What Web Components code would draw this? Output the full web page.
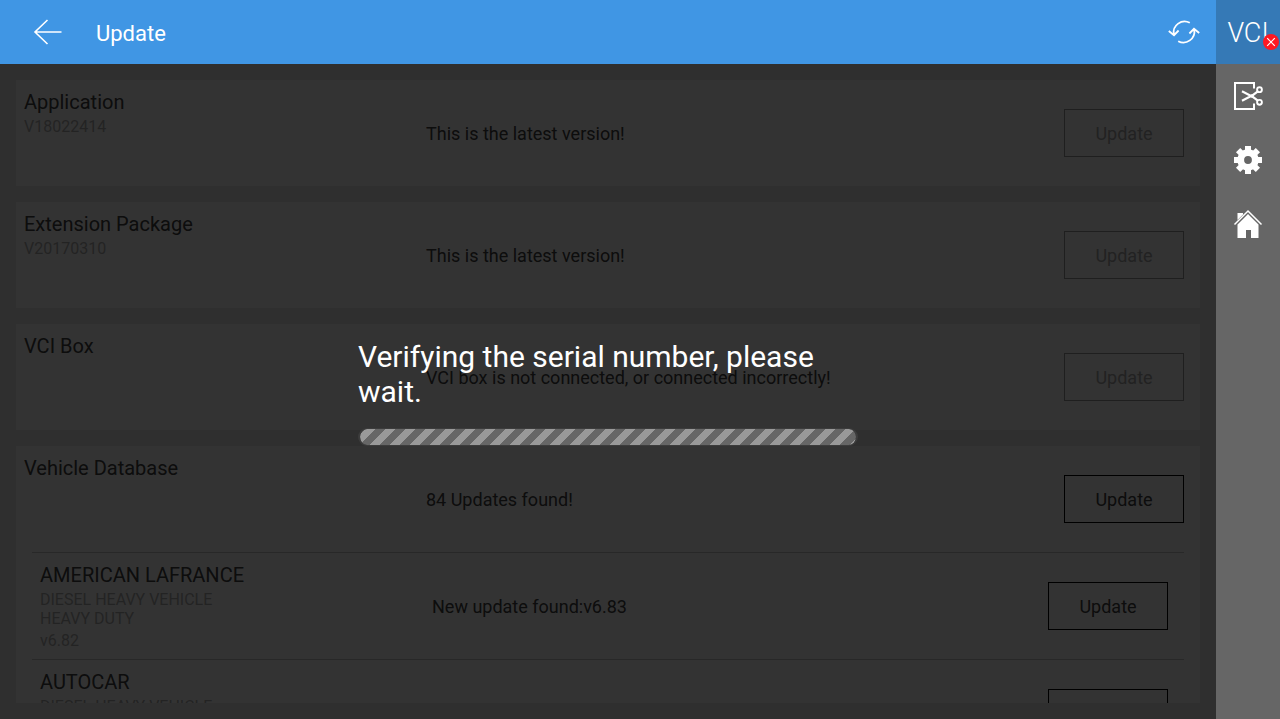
<!DOCTYPE html>
<html lang="en">
<head>
<meta charset="utf-8">
<meta name="viewport" content="width=device-width, initial-scale=1">
<title>Update</title>
<style>
  html, body {
    height: 100%;
    margin: 0;
  }

  body {
    font-family: Roboto, sans-serif;
  }
</style>
</head>
<body>

<update-screen>
  <title-bar slot="header" heading="Update"></title-bar>

  <package-card heading="Application" version="V18022414" status="This is the latest version!" disabled></package-card>
  <package-card heading="Extension Package" version="V20170310" status="This is the latest version!" disabled></package-card>
  <package-card heading="VCI Box" status="VCI box is not connected, or connected incorrectly!" disabled></package-card>
  <package-card heading="Vehicle Database" status="84 Updates found!">
    <vehicle-row heading="AMERICAN LAFRANCE" version="v6.82" status="New update found:v6.83">DIESEL HEAVY VEHICLE<br>HEAVY DUTY</vehicle-row>
    <vehicle-row heading="AUTOCAR">DIESEL HEAVY VEHICLE</vehicle-row>
  </package-card>

  <wait-overlay slot="overlay">Verifying the serial number, please wait.</wait-overlay>
  <side-bar slot="side"></side-bar>
</update-screen>

<script>
// Attach a shadow root filled from markup
function shadow( element, markup ) {
  const template = document.createElement( 'template' );
  template.innerHTML = markup;
  element.attachShadow( {mode: 'open'} );
  element.shadowRoot.appendChild( template.content.cloneNode( true ) );
}

class UpdateScreen extends HTMLElement {
  constructor() {
    super();

    shadow( this, /* template */ `
      <style>
        :host {
          display: flex;
          height: 100vh;
          overflow: hidden;
        }

        .page {
          display: flex;
          flex: 1;
          flex-direction: column;
          min-width: 0;
        }

        main {
          background: #ebebeb;
          box-sizing: border-box;
          display: flex;
          flex: 1;
          min-height: 0;
          padding: 16px;
          position: relative;
        }

        .list {
          display: flex;
          flex: 1;
          flex-direction: column;
          gap: 16px;
          overflow: hidden;
        }
      </style>
      <div class="page">
        <slot name="header"></slot>
        <main>
          <div class="list">
            <slot></slot>
          </div>
          <slot name="overlay"></slot>
        </main>
      </div>
      <slot name="side"></slot>
    ` );
  }
}

class TitleBar extends HTMLElement {
  constructor() {
    super();

    shadow( this, /* template */ `
      <style>
        :host {
          align-items: center;
          background: #4096e4;
          color: #ffffff;
          display: flex;
          flex: none;
          height: 64px;
        }

        h1 {
          flex: 1;
          font-size: 22px;
          font-weight: 400;
          line-height: 32px;
          margin: 0;
          padding-top: 4px;
        }

        button {
          align-items: center;
          background: none;
          border: none;
          color: inherit;
          cursor: pointer;
          display: flex;
          height: 64px;
          justify-content: center;
          padding: 0;
          width: 64px;
        }

        .back {
          width: 96px;
        }

        svg {
          fill: none;
          stroke: currentColor;
        }
      </style>
      <button class="back" aria-label="Back">
        <svg width="32" height="32" viewBox="0 0 32 32" stroke-width="1.6">
          <path d="M15.500 4 3 16l12.500 12M3 16h26.500"/>
        </svg>
      </button>
      <h1></h1>
      <button aria-label="Refresh">
        <svg width="32" height="32" viewBox="0 0 32 32" stroke-width="1.8">
          <path d="M21.800 6.800A11 11 0 0 0 5.800 18.500M.8 15l5.200 4.200 4.600-4.700"/>
          <path d="M10.200 25.200A11 11 0 0 0 26.200 13.500M31.200 17 26 12.800l-4.600 4.700"/>
        </svg>
      </button>
    ` );

    this.$heading = this.shadowRoot.querySelector( 'h1' );
  }

  connectedCallback() {
    this.$heading.textContent = this.getAttribute( 'heading' );
  }
}

class UpdateButton extends HTMLElement {
  constructor() {
    super();

    shadow( this, /* template */ `
      <style>
        :host {
          display: block;
        }

        button {
          background: none;
          border: 1px solid #000000;
          box-sizing: border-box;
          color: #404040;
          display: block;
          font: 18px/22px Roboto, sans-serif;
          height: 48px;
          padding: 2px 0 0;
          width: 100%;
        }

        button:disabled {
          border-color: #9c9c9c;
          color: #a8a8a8;
        }
      </style>
      <button>Update</button>
    ` );

    this.$button = this.shadowRoot.querySelector( 'button' );
  }

  // Watched attributes
  static get observedAttributes() {
    return [
      'disabled'
    ];
  }

  attributeChangedCallback( name, old, value ) {
    this.$button.disabled = value !== null;
  }
}

// Shared between cards and the rows inside them
const entry = /* template */ `
  .entry {
    box-sizing: border-box;
    display: grid;
    height: 106px;
    padding: 8px 16px 0 8px;
  }

  .text {
    color: #b0b0b0;
    font-size: 16px;
    line-height: 19px;
  }

  h2, h3 {
    color: #404040;
    font-size: 20px;
    font-weight: 400;
    line-height: 28px;
    margin: 0;
    padding-bottom: 1px;
  }

  p {
    margin: 0;
  }

  .status {
    color: #404040;
    font-size: 18px;
    line-height: 22px;
    padding-top: 35px;
  }

  update-button {
    padding-top: 21px;
  }
`;

class PackageCard extends HTMLElement {
  constructor() {
    super();

    shadow( this, /* template */ `
      <style>
        ${entry}

        :host {
          background: #ffffff;
          display: block;
          flex: none;
        }

        .entry {
          grid-template-columns: 402fr 638fr 120px;
        }

        .rows {
          padding: 0 16px;
        }
      </style>
      <section>
        <div class="entry">
          <div class="text">
            <h2></h2>
            <p class="version"></p>
          </div>
          <p class="status"></p>
          <update-button></update-button>
        </div>
        <div class="rows"><slot></slot></div>
      </section>
    ` );

    this.$button = this.shadowRoot.querySelector( 'update-button' );
    this.$heading = this.shadowRoot.querySelector( 'h2' );
    this.$status = this.shadowRoot.querySelector( '.status' );
    this.$version = this.shadowRoot.querySelector( '.version' );
  }

  connectedCallback() {
    this.$button.toggleAttribute( 'disabled', this.hasAttribute( 'disabled' ) );
    this.$heading.textContent = this.getAttribute( 'heading' );
    this.$status.textContent = this.getAttribute( 'status' );
    this.$version.textContent = this.getAttribute( 'version' );
  }
}

class VehicleRow extends HTMLElement {
  constructor() {
    super();

    shadow( this, /* template */ `
      <style>
        ${entry}

        :host {
          border-top: 1px solid #c8c8c8;
          display: block;
        }

        .entry {
          grid-template-columns: 7fr 11fr 120px;
        }

        .version {
          padding-top: 3px;
        }
      </style>
      <div class="entry">
        <div class="text">
          <h3></h3>
          <p><slot></slot></p>
          <p class="version"></p>
        </div>
        <p class="status"></p>
        <update-button></update-button>
      </div>
    ` );

    this.$heading = this.shadowRoot.querySelector( 'h3' );
    this.$status = this.shadowRoot.querySelector( '.status' );
    this.$version = this.shadowRoot.querySelector( '.version' );
  }

  connectedCallback() {
    this.$heading.textContent = this.getAttribute( 'heading' );
    this.$status.textContent = this.getAttribute( 'status' );
    this.$version.textContent = this.getAttribute( 'version' );
  }
}

class WaitOverlay extends HTMLElement {
  constructor() {
    super();

    shadow( this, /* template */ `
      <style>
        :host {
          align-items: center;
          background: rgba( 0, 0, 0, 0.80 );
          color: #ffffff;
          display: flex;
          inset: 0;
          justify-content: center;
          position: absolute;
        }

        .dialog {
          display: flex;
          flex-direction: column;
          gap: 19px;
          max-width: 500px;
        }

        label {
          font-size: 30px;
          line-height: 35px;
          padding-top: 1px;
        }

        progress {
          appearance: none;
          background: linear-gradient( 135deg, #666666 25%, #999999 25%, #999999 50%, #666666 50%, #666666 75%, #999999 75% ) -4px 0 / 20px 20px padding-box;
          border: 1px solid #3c3c3c;
          border-left-width: 2px;
          border-radius: 9px;
          border-right-width: 2px;
          box-sizing: border-box;
          display: block;
          height: 18px;
          width: 100%;
        }

        progress::-webkit-progress-bar {
          background: none;
        }
      </style>
      <div class="dialog" role="status">
        <label for="wait"><slot></slot></label>
        <progress id="wait"></progress>
      </div>
    ` );
  }
}

class SideBar extends HTMLElement {
  constructor() {
    super();

    shadow( this, /* template */ `
      <style>
        :host {
          background: #666666;
          display: flex;
          flex: none;
          flex-direction: column;
          width: 64px;
        }

        button {
          align-items: center;
          background: none;
          border: none;
          color: #ffffff;
          cursor: pointer;
          display: flex;
          height: 64px;
          justify-content: center;
          padding: 0;
          width: 64px;
        }

        .vci {
          background: #3579b6;
          font: 300 27px/32px Roboto, sans-serif;
          padding-top: 2px;
          position: relative;
        }

        .badge {
          bottom: 14px;
          position: absolute;
          right: 1px;
        }
      </style>
      <button class="vci">VCI
        <svg class="badge" width="16" height="16" viewBox="0 0 16 16">
          <circle cx="8" cy="8" r="8" fill="#ff1822"/>
          <path d="m4.200 4.200 7.600 7.600m0-7.600-7.600 7.600" stroke="#fff" stroke-width="1.200"/>
        </svg>
      </button>
      <button aria-label="Screenshot">
        <svg width="32" height="32" viewBox="0 0 32 32" fill="none" stroke="currentColor">
          <path d="M22 8.500V3H3v26h19v-5.500" stroke-width="2"/>
          <path d="m10 11.300 9.500 4.900 6.300-4.900M10 20.700l9.500-4.900 6.300 4.900" stroke-width="2.200"/>
          <circle cx="20" cy="16" r="1.800" fill="currentColor" stroke="none"/>
          <circle cx="27.500" cy="9.700" r="2.400" stroke-width="1.900"/>
          <circle cx="27.500" cy="22.300" r="2.400" stroke-width="1.900"/>
        </svg>
      </button>
      <button aria-label="Settings">
        <svg width="32" height="32" viewBox="-16 -16 32 32">
          <circle r="7.300" fill="none" stroke="currentColor" stroke-width="6.800"/>
          <g fill="currentColor">
            <path d="M-3-14h6v5h-6zM-3 9h6v5h-6z"/>
            <path d="M-3-14h6v5h-6zM-3 9h6v5h-6z" transform="rotate(45)"/>
            <path d="M-3-14h6v5h-6zM-3 9h6v5h-6z" transform="rotate(90)"/>
            <path d="M-3-14h6v5h-6zM-3 9h6v5h-6z" transform="rotate(135)"/>
          </g>
        </svg>
      </button>
      <button aria-label="Home">
        <svg width="32" height="32" viewBox="0 0 32 32">
          <path d="M2.500 16.500 16 3l13.500 13.500" fill="none" stroke="currentColor" stroke-width="1.500"/>
          <path d="M5.500 5H11v1.500l-5.500 5.500zM16 6l10.500 10.500V30H19v-8h-5v8H5.500V16.500z" fill="currentColor"/>
        </svg>
      </button>
    ` );
  }
}

window.customElements.define( 'update-button', UpdateButton );
window.customElements.define( 'package-card', PackageCard );
window.customElements.define( 'vehicle-row', VehicleRow );
window.customElements.define( 'title-bar', TitleBar );
window.customElements.define( 'wait-overlay', WaitOverlay );
window.customElements.define( 'side-bar', SideBar );
window.customElements.define( 'update-screen', UpdateScreen );
</script>
</body>
</html>
